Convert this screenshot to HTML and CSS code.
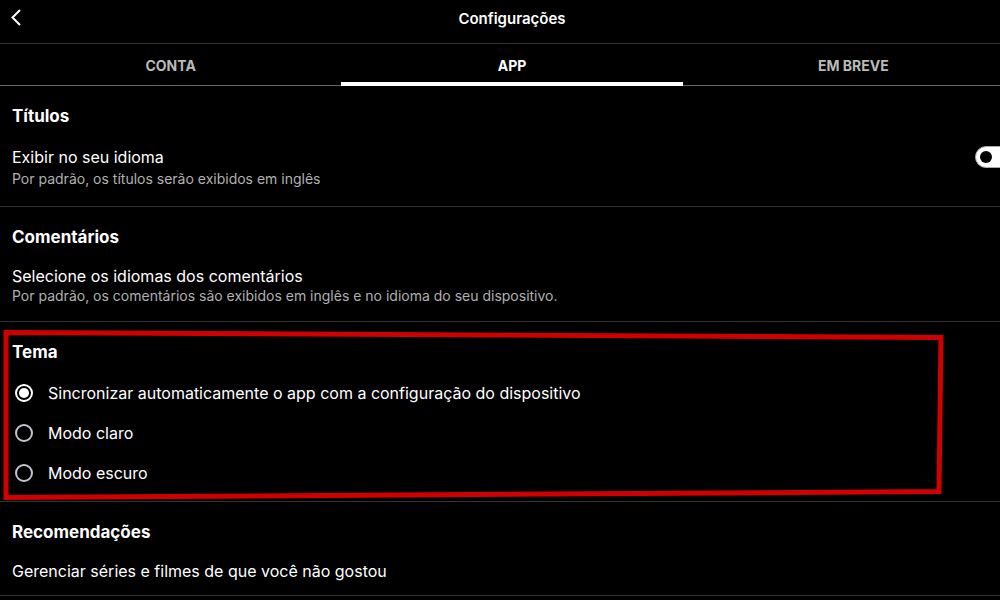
FILE: index.html
```html
<!DOCTYPE html>
<html lang="pt-BR">
<head>
<meta charset="utf-8">
<meta name="viewport" content="width=device-width, initial-scale=1">
<title>Configurações</title>
<link rel="stylesheet" href="styles.css">
</head>
<body>
<div class="screen">
  <header class="topbar">
    <button class="back" type="button" aria-label="Voltar">
      <svg width="12" height="18" viewBox="0 0 12 18" fill="none" stroke="#fff" stroke-width="2"><path d="M10 1 2.500 8.500 10 16"/></svg>
    </button>
    <h1 class="title">Configurações</h1>
  </header>
  <nav class="tabs">
    <a class="tab" href="#conta">CONTA</a>
    <a class="tab tab-active" href="#app" aria-current="page">APP</a>
    <a class="tab" href="#em-breve">EM BREVE</a>
  </nav>
  <main>
    <section class="section section-titles">
      <h2 class="heading">Títulos</h2>
      <div class="setting">
        <div class="setting-text">
          <label class="label" for="own-language">Exibir no seu idioma</label>
          <p class="hint">Por padrão, os títulos serão exibidos em inglês</p>
        </div>
        <input class="switch" type="checkbox" role="switch" id="own-language">
      </div>
    </section>
    <section class="section section-comments">
      <h2 class="heading">Comentários</h2>
      <a class="label link" href="#idiomas">Selecione os idiomas dos comentários</a>
      <p class="hint">Por padrão, os comentários são exibidos em inglês e no idioma do seu dispositivo.</p>
    </section>
    <section class="section section-theme">
      <h2 class="heading">Tema</h2>
      <label class="option"><input class="radio" type="radio" name="theme" checked>Sincronizar automaticamente o app com a configuração do dispositivo</label>
      <label class="option"><input class="radio" type="radio" name="theme">Modo claro</label>
      <label class="option"><input class="radio" type="radio" name="theme">Modo escuro</label>
      <svg class="marker" viewBox="0 0 1024 180" preserveAspectRatio="none" aria-hidden="true"><path d="M6 10.500 941 15.500 939 170.500 6 176.500Z" fill="none" stroke="#d00000" stroke-width="5"/></svg>
    </section>
    <section class="section section-recommendations">
      <h2 class="heading">Recomendações</h2>
      <a class="label link" href="#gerenciar">Gerenciar séries e filmes de que você não gostou</a>
    </section>
  </main>
</div>
</body>
</html>
```
FILE: styles.css
```css
* {
  box-sizing: border-box;
}

body {
  margin: 0;
  background: #000;
  color: #fff;
  font-family: Inter, "Liberation Sans", sans-serif;
  font-size: 16px;
  overflow: hidden;
}

h1, h2, p {
  margin: 0;
}

/* The layout runs past the right edge of the window. */
.screen {
  margin-right: -24px;
}

.topbar {
  display: grid;
  grid-template-columns: 36px 1fr 36px;
  align-items: center;
  padding: 3px 0 8px;
  border-bottom: 1px solid #333;
}

.back {
  display: flex;
  padding: 0 0 2px 10px;
  border: 0;
  background: none;
}

.title {
  font-size: 15px;
  font-weight: 600;
  line-height: 32px;
  text-align: center;
}

.tabs {
  display: grid;
  grid-template-columns: repeat(3, 1fr);
  border-bottom: 1px solid #666;
}

.tab {
  padding: 12px 0 9px;
  color: #bababa;
  font-size: 14px;
  font-weight: 700;
  line-height: 20px;
  text-align: center;
  text-decoration: none;
}

.tab-active {
  color: #fff;
  margin-bottom: -1px;
  border-bottom: 4px solid #fff;
  padding-bottom: 6px;
}

.section {
  padding: 18px 12px 16px;
  border-bottom: 1px solid #333;
}

.heading {
  margin-bottom: 16px;
  font-size: 17px;
  font-weight: 700;
  line-height: 24px;
}

.label {
  display: block;
  line-height: 22px;
}

.link {
  color: inherit;
  text-decoration: none;
}

.hint {
  color: #b0b0b0;
  font-size: 14px;
  line-height: 18px;
}

.section-titles {
  padding-bottom: 18px;
}

.section-titles .heading {
  margin-bottom: 18px;
}

.setting {
  display: flex;
  justify-content: space-between;
  align-items: flex-start;
}

.setting-text {
  display: grid;
  gap: 2px;
}

.switch {
  appearance: none;
  display: flex;
  align-items: center;
  width: 37px;
  height: 22px;
  margin: 0;
  padding: 0 4px;
  border: 1px solid #a9a9b2;
  border-radius: 11px;
  background: #fff;
}

.switch::before {
  content: "";
  width: 12px;
  height: 12px;
  border-radius: 50%;
  background: #000;
}

.section-theme {
  position: relative;
  padding-bottom: 8px;
}

.section-theme .heading {
  margin-bottom: 9px;
}

.option {
  display: flex;
  align-items: center;
  gap: 15px;
  padding-left: 3px;
  line-height: 40px;
}

.radio {
  appearance: none;
  display: grid;
  place-items: center;
  width: 18px;
  height: 18px;
  margin: 0;
  border: 2px solid #c4c4cf;
  border-radius: 50%;
}

.radio:checked {
  border-color: #fff;
}

.radio:checked::before {
  content: "";
  width: 10px;
  height: 10px;
  border-radius: 50%;
  background: #fff;
}

/* Hand-drawn frame laid over the theme section. */
.marker {
  position: absolute;
  inset: 0;
  width: 100%;
  height: 100%;
  pointer-events: none;
}

.section-recommendations {
  padding-bottom: 13px;
}
```
